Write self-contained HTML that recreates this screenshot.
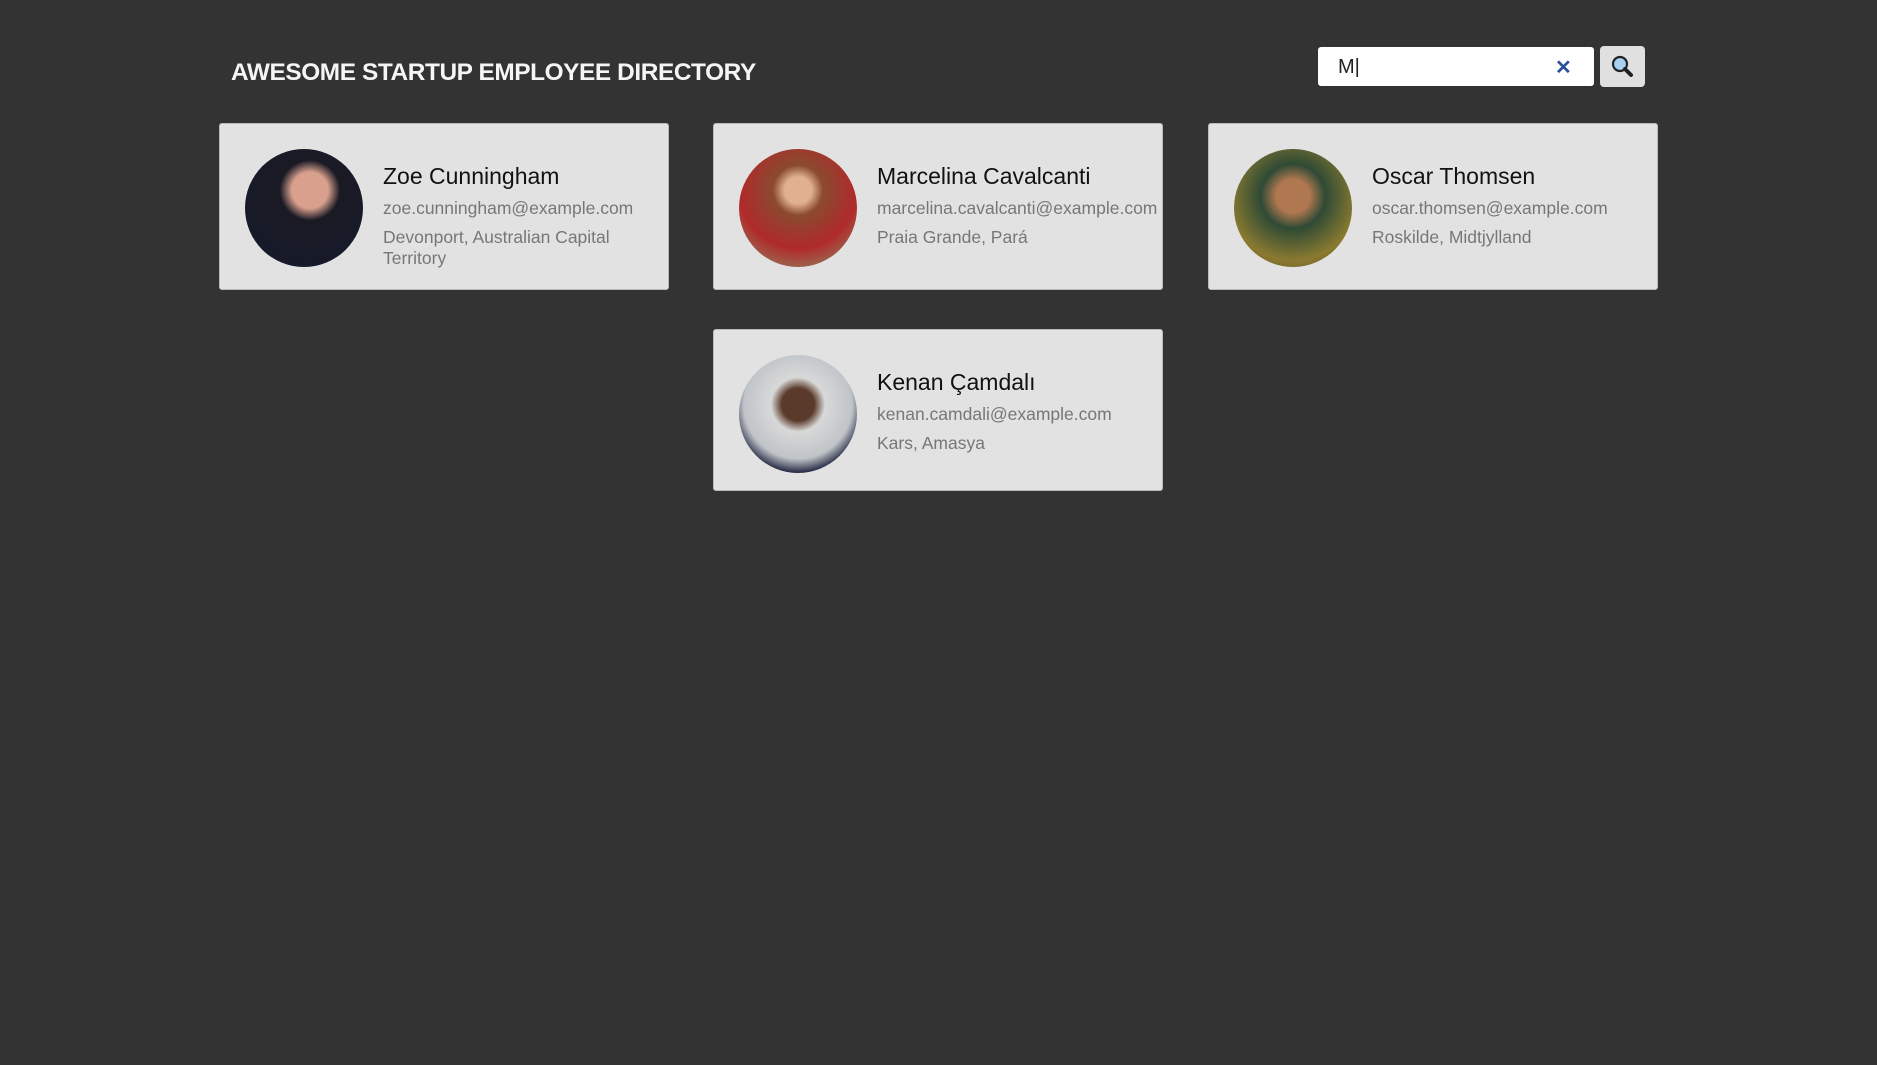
<!DOCTYPE html>
<html><head><meta charset="utf-8"><style>
body{margin:0;background:#333333;width:1877px;height:1065px;font-family:"Liberation Sans",sans-serif;position:relative;overflow:hidden}
h1{position:absolute;left:231px;top:59px;margin:0;font-size:24.4px;font-weight:bold;color:#f5f5f5;letter-spacing:-0.4px}
.search{position:absolute;left:1318px;top:47px;width:276px;height:39px;background:#fff;border-radius:3px;box-sizing:border-box}
.search .t{position:absolute;left:20px;top:9px;font-size:20px;color:#222}
.search .x{position:absolute;left:237px;top:8px;font-size:20px;color:#2a5298;font-weight:bold}
.btn{position:absolute;left:1600px;top:46px;width:45px;height:41px;background:#e0e0e0;border-radius:4px}
.card{position:absolute;width:450px;height:167px;background:#e2e2e2;border:1px solid #bbb;border-radius:3px;box-sizing:border-box}
.av{position:absolute;left:25px;top:25px;width:118px;height:118px;border-radius:50%}
.info{position:absolute;left:163px;top:39px}
.n{font-size:23px;color:#111;margin-bottom:8px}
.e,.l{font-size:17.5px;color:#777;line-height:21px}
.e{margin-bottom:8px}
</style></head><body>
<h1>AWESOME STARTUP EMPLOYEE DIRECTORY</h1>
<div class="search"><span class="t">M|</span><span class="x">✕</span></div>
<div class="btn"><svg width="45" height="41" viewBox="0 0 45 41"><circle cx="20" cy="18" r="7" fill="#a8d0f0" stroke="#222" stroke-width="2.2"/><line x1="25" y1="23" x2="31" y2="29" stroke="#222" stroke-width="4" stroke-linecap="round"/></svg></div>

<div class="card" style="left:219px;top:123px"><div class="av" style="background:radial-gradient(circle at 55% 35%,#d9a08e 0 18%,#1a1a24 30%,#141a2c)"></div><div class="info"><div class="n">Zoe Cunningham</div><div class="e">zoe.cunningham@example.com</div><div class="l">Devonport, Australian Capital<br>Territory</div></div></div>
<div class="card" style="left:713px;top:123px"><div class="av" style="background:radial-gradient(circle at 50% 35%,#e0b090 0 14%,#8a4a30 26%,#b02a2a 60%,#8a9a70)"></div><div class="info"><div class="n">Marcelina Cavalcanti</div><div class="e">marcelina.cavalcanti@example.com</div><div class="l">Praia Grande, Pará</div></div></div>
<div class="card" style="left:1208px;top:123px"><div class="av" style="background:radial-gradient(circle at 50% 40%,#b07850 0 18%,#2f4a35 35%,#8a7a30 70%,#5a4a20)"></div><div class="info"><div class="n">Oscar Thomsen</div><div class="e">oscar.thomsen@example.com</div><div class="l">Roskilde, Midtjylland</div></div></div>
<div class="card" style="left:713px;top:329px;height:162px"><div class="av" style="background:radial-gradient(circle at 50% 42%,#5a3a2a 0 18%,#d8d8d8 30%,#c0c4c8 60%,#2a2e48 75%)"></div><div class="info"><div class="n">Kenan Çamdalı</div><div class="e">kenan.camdali@example.com</div><div class="l">Kars, Amasya</div></div></div>
</body></html>
